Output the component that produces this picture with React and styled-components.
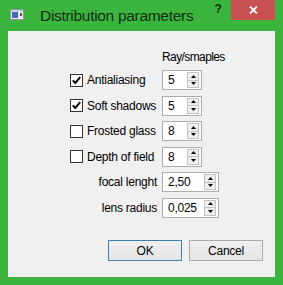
import React from 'react'
import styled, { createGlobalStyle } from 'styled-components'

const GlobalStyle = createGlobalStyle`
  html, body {
    margin: 0;
    padding: 0;
    background: #3cb53f;
  }
  body {
    font-family: "Liberation Sans", Arial, sans-serif;
    font-size: 12px;
    letter-spacing: -0.25px;
    color: #000;
  }
`

const Frame = styled.div`
  width: 283px;
  height: 285px;
  background: #3cb53f;
  display: flex;
  flex-direction: column;
  box-sizing: border-box;
  padding: 0 8px 8px 8px;
`

const TitleBar = styled.div`
  height: 31px;
  display: flex;
  align-items: flex-start;
  margin-right: -8px;
`

const TitleIcon = styled.svg`
  margin: 9px 0 0 2px;
  flex: none;
`

const Title = styled.div`
  margin: 8px 0 0 16px;
  font-size: 15.5px;
  letter-spacing: -0.3px;
  line-height: 16px;
  color: #132c13;
  flex: 1;
  white-space: nowrap;
`

const HelpButton = styled.div`
  width: 26px;
  height: 20px;
  display: flex;
  align-items: center;
  justify-content: center;
  font-weight: bold;
  font-size: 12px;
  color: #132c13;
  padding-bottom: 3px;
  box-sizing: border-box;
`

const CloseButton = styled.div`
  width: 44px;
  height: 20px;
  margin-right: 8px;
  background: #c75050;
  display: flex;
  align-items: center;
  justify-content: center;
`

const Client = styled.div`
  flex: 1;
  background: #f0f0f0;
  display: flex;
  flex-direction: column;
  padding-top: 19px;
`

const Grid = styled.div`
  display: grid;
  grid-template-columns: 89px auto;
  column-gap: 3px;
  row-gap: 5.5px;
  margin-left: 62px;
  align-items: center;
`

const Header = styled.div`
  grid-column: 2;
  line-height: 14px;
  height: 14px;
  margin-bottom: 0.5px;
  letter-spacing: -0.6px;
  white-space: nowrap;
`

const CheckLabel = styled.label`
  display: flex;
  align-items: center;
  gap: 4px;
  white-space: nowrap;
`

const Box = styled.span`
  width: 13px;
  height: 13px;
  box-sizing: border-box;
  border: 1px solid #333;
  background: #fff;
  display: flex;
  align-items: center;
  justify-content: center;
  flex: none;
`

const FieldLabel = styled.div`
  text-align: right;
  padding-right: 2px;
  white-space: nowrap;
`

const Spin = styled.div`
  width: ${p => p.$w}px;
  height: 20px;
  box-sizing: border-box;
  border: 1px solid #acacac;
  background: #fff;
  display: flex;
  align-items: center;
  padding: 1px 2px 1px 5px;
`

const SpinValue = styled.span`
  flex: 1;
`

const Arrows = styled.div`
  width: 12px;
  height: 16px;
  box-sizing: border-box;
  border: 1px solid #c3c3c3;
  background: #efefef;
  display: flex;
  flex-direction: column;
`

const ArrowHalf = styled.div`
  flex: 1;
  display: flex;
  align-items: center;
  justify-content: center;
  border-top: ${p => (p.$down ? '1px solid #c3c3c3' : 'none')};
`

const Buttons = styled.div`
  display: flex;
  justify-content: flex-end;
  gap: 7px;
  margin-top: 22.5px;
  padding-right: 12px;
`

const Button = styled.div`
  width: 74px;
  height: 21px;
  box-sizing: border-box;
  border: 1px solid ${p => (p.$def ? '#3c7fb1' : '#acacac')};
  background: linear-gradient(#f0f0f0, #e5e5e5);
  display: flex;
  align-items: center;
  justify-content: center;
`

const Checkbox = ({ checked, children }) => (
  <CheckLabel>
    <Box>
      {checked && (
        <svg width="11" height="11" viewBox="0 0 11 11">
          <path d="M1.8 5.4 L4.3 8 L9.2 2.2" fill="none" stroke="#000" strokeWidth="2" />
        </svg>
      )}
    </Box>
    {children}
  </CheckLabel>
)

const SpinBox = ({ value, width = 40 }) => (
  <Spin $w={width}>
    <SpinValue>{value}</SpinValue>
    <Arrows>
      <ArrowHalf>
        <svg width="5" height="3" viewBox="0 0 5 3">
          <path d="M0 3 L2.5 0 L5 3 Z" fill="#000" />
        </svg>
      </ArrowHalf>
      <ArrowHalf $down>
        <svg width="5" height="3" viewBox="0 0 5 3">
          <path d="M0 0 L2.5 3 L5 0 Z" fill="#000" />
        </svg>
      </ArrowHalf>
    </Arrows>
  </Spin>
)

const rows = [
  { label: 'Antialiasing', checked: true, value: '5' },
  { label: 'Soft shadows', checked: true, value: '5' },
  { label: 'Frosted glass', checked: false, value: '8' },
  { label: 'Depth of field', checked: false, value: '8' },
]

export default function App() {
  return (
    <Frame>
      <GlobalStyle />
      <TitleBar>
        <TitleIcon width="14" height="11" viewBox="0 0 14 11">
          <rect x="0.5" y="0.5" width="13" height="10" fill="#e8ecf2" stroke="#8b95a3" />
          <rect x="1" y="1" width="12" height="2" fill="#c9d3df" />
          <rect x="2" y="3" width="6" height="6" fill="#3d6fb0" />
          <rect x="10" y="4" width="2" height="3" fill="#556" />
        </TitleIcon>
        <Title>Distribution parameters</Title>
        <HelpButton>?</HelpButton>
        <CloseButton>
          <svg width="9" height="8" viewBox="0 0 9 8">
            <path d="M1 0.5 L8 7.5 M8 0.5 L1 7.5" stroke="#fff" strokeWidth="1.8" />
          </svg>
        </CloseButton>
      </TitleBar>
      <Client>
        <Grid>
          <Header>Ray/smaples</Header>
          {rows.map(r => (
            <React.Fragment key={r.label}>
              <Checkbox checked={r.checked}>{r.label}</Checkbox>
              <SpinBox value={r.value} />
            </React.Fragment>
          ))}
          <FieldLabel>focal lenght</FieldLabel>
          <SpinBox value="2,50" width={57} />
          <FieldLabel>lens radius</FieldLabel>
          <SpinBox value="0,025" width={57} />
        </Grid>
        <Buttons>
          <Button $def>OK</Button>
          <Button>Cancel</Button>
        </Buttons>
      </Client>
    </Frame>
  )
}
